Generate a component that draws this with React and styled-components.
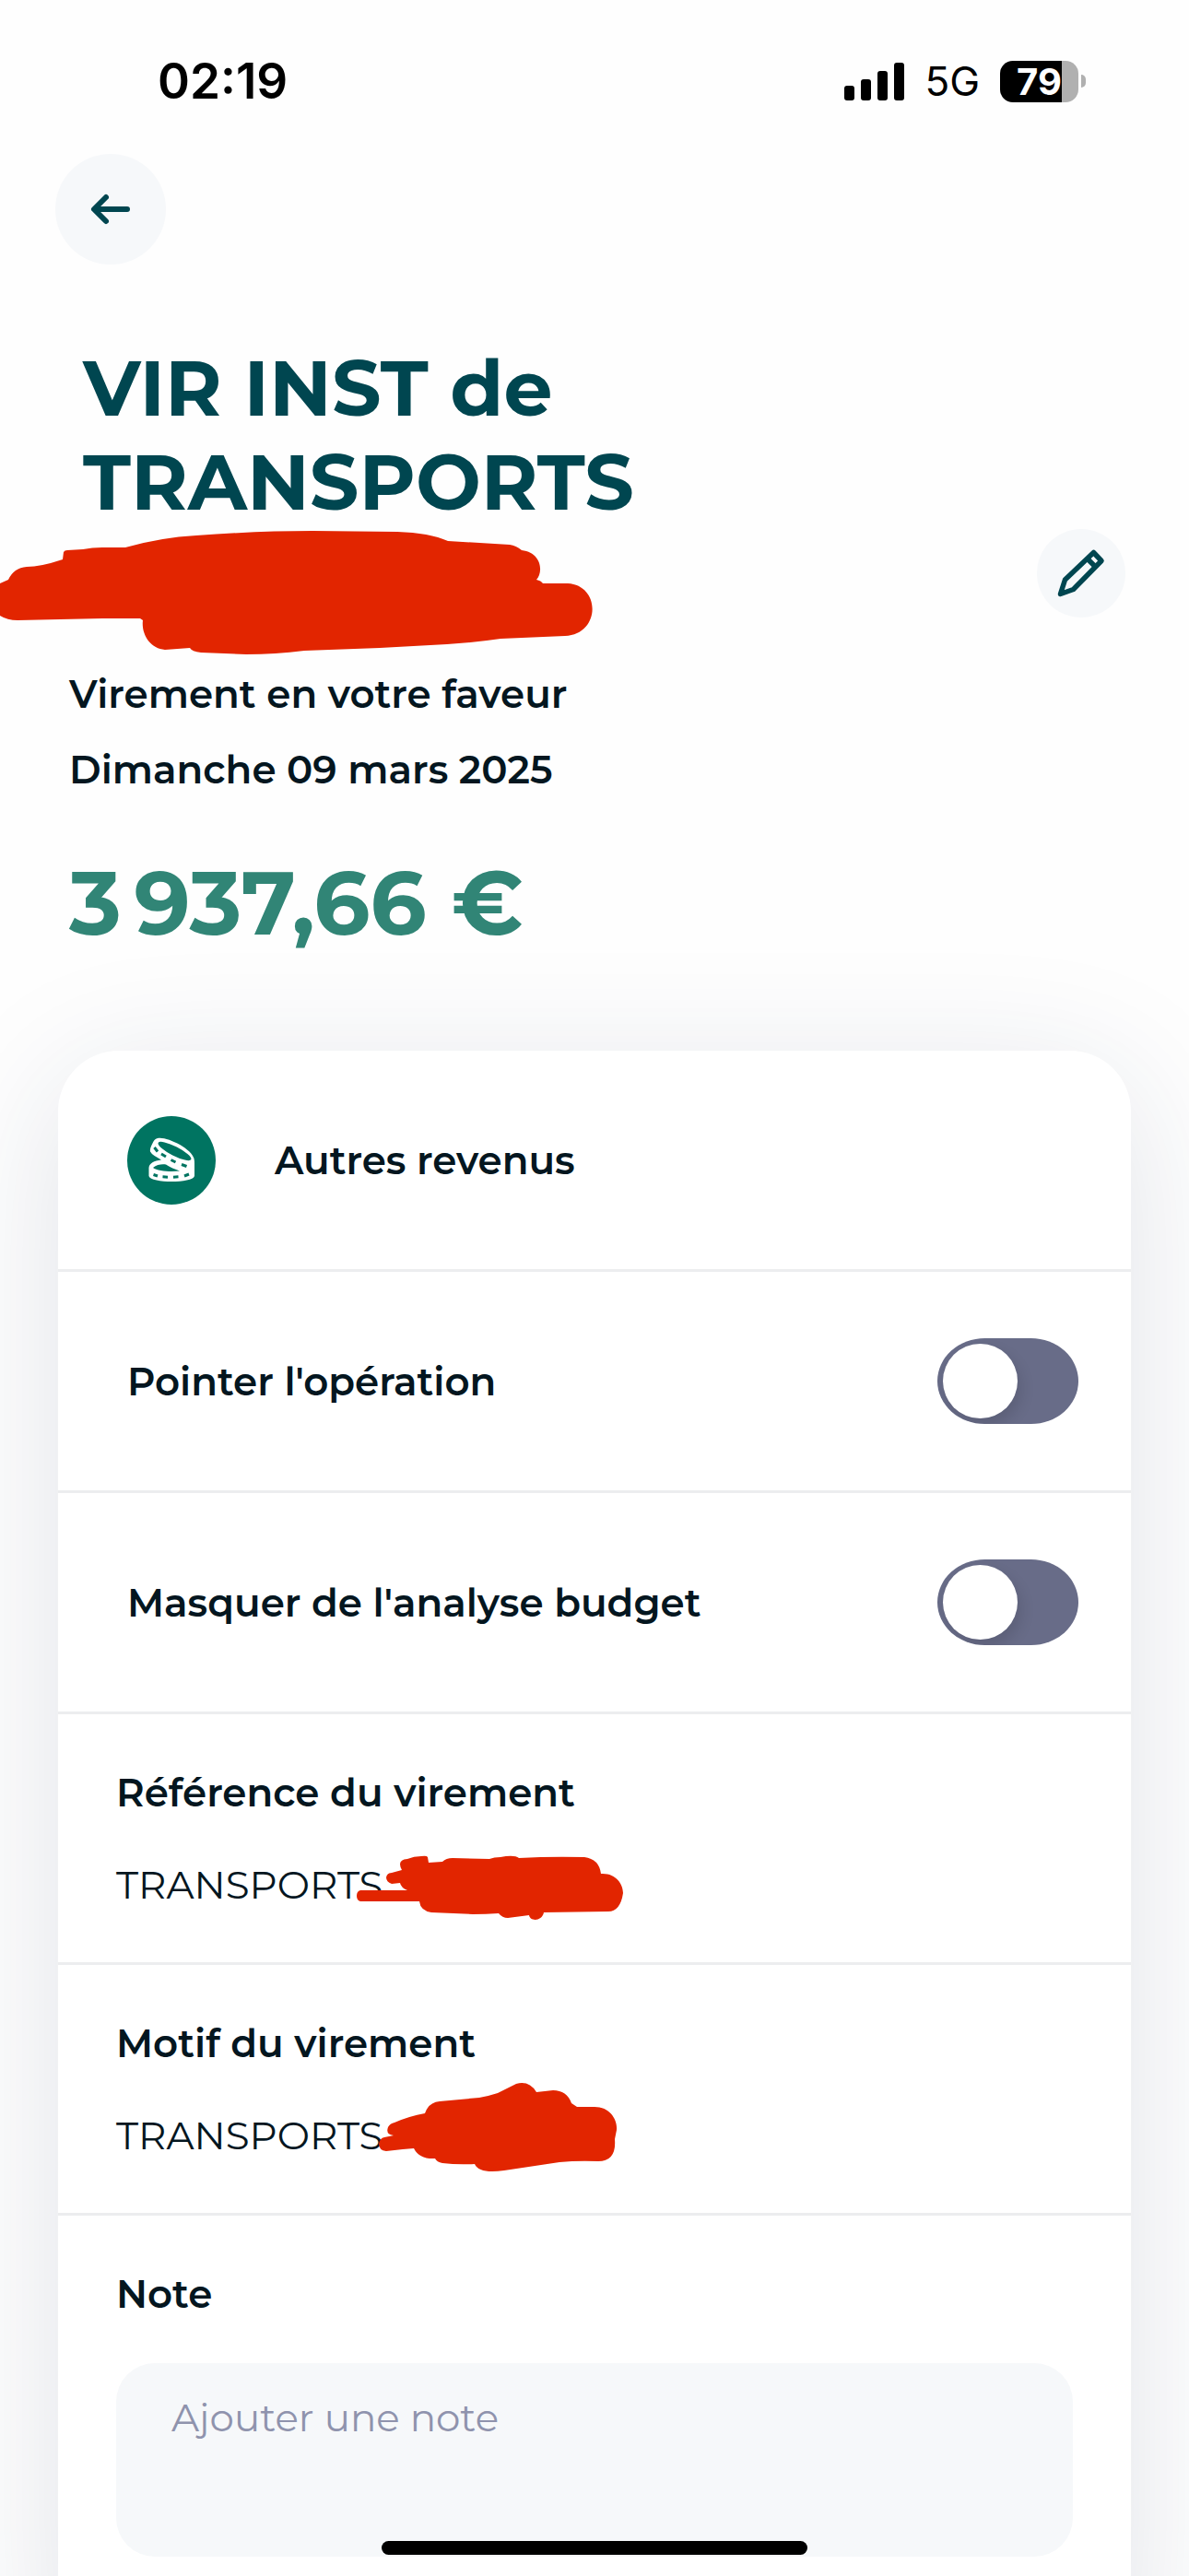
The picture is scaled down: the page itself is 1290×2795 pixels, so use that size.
import React, { useState } from "react";
import styled, { createGlobalStyle } from "styled-components";

const colors = {
  ink: "#04161f",
  petrol: "#004650",
  amount: "#318576",
  green: "#007461",
  red: "#e22500",
  soft: "#f6f8fa",
  line: "#ecedef",
  toggle: "#686c88",
  placeholder: "#8f93ad",
};

const GlobalStyle = createGlobalStyle`
  * {
    box-sizing: border-box;
  }
  body {
    margin: 0;
    background: #fefefe;
    color: ${colors.ink};
    font-family: Montserrat, Inter, "Liberation Sans", sans-serif;
  }
`;

const Screen = styled.div`
  display: flex;
  flex-direction: column;
  height: 100vh;
  overflow: hidden;
  position: relative;
`;

const StatusBar = styled.div`
  flex: none;
  display: flex;
  justify-content: space-between;
  align-items: center;
  padding: 56px 112px 47px 171px;
  color: #000;
  font-family: Inter, sans-serif;
`;

const Clock = styled.time`
  font-size: 53px;
  line-height: 64px;
  font-weight: 600;
`;

const Indicators = styled.div`
  display: flex;
  align-items: center;
  gap: 22px;
`;

const Network = styled.span`
  font-size: 44px;
  line-height: 64px;
`;

const Battery = styled.div`
  display: flex;
  align-items: center;
  gap: 3px;
`;

const BatteryBody = styled.div`
  width: 85px;
  height: 45px;
  border-radius: 14px;
  background: linear-gradient(to right, #000 79%, #b0b0b0 79%);
  color: #fff;
  font-size: 40px;
  line-height: 45px;
  font-weight: 700;
  text-align: center;
`;

const BatteryTip = styled.div`
  width: 5px;
  height: 14px;
  border-radius: 0 5px 5px 0;
  background: #b0b0b0;
`;

const Nav = styled.nav`
  flex: none;
  padding: 0 60px;
`;

const RoundButton = styled.button`
  display: flex;
  flex: none;
  align-items: center;
  justify-content: center;
  width: ${({ $size }) => $size}px;
  height: ${({ $size }) => $size}px;
  padding: 0;
  border: none;
  border-radius: 50%;
  background: ${colors.soft};
  color: ${colors.petrol};
  cursor: pointer;
`;

const Heading = styled.header`
  flex: none;
  display: flex;
  justify-content: space-between;
  align-items: flex-end;
  padding: 83px 69px 0 0;

  ${RoundButton} {
    margin-bottom: 42px;
  }
`;

const Title = styled.h1`
  margin: 0;
  padding-left: 90px;
  color: ${colors.petrol};
  font-size: 84px;
  line-height: 102px;
  font-weight: 700;
`;

const Mask = styled.svg`
  display: block;
  fill: ${colors.red};
`;

const Summary = styled.section`
  flex: none;
  padding: 0 75px;
`;

const Detail = styled.p`
  margin: 0;
  font-size: 42px;
  line-height: 82px;
  font-weight: 600;
`;

const Amount = styled.p`
  margin: 44px 0 0;
  color: ${colors.amount};
  font-size: 96px;
  line-height: 120px;
  font-weight: 700;
`;

const Card = styled.main`
  flex: none;
  margin: 100px 63px 0;
  padding-bottom: 66px;
  border-radius: 66px;
  background: #fff;
  box-shadow: 0 30px 150px rgba(30, 45, 85, 0.13);
`;

const Row = styled.div`
  display: flex;
  align-items: center;
  justify-content: ${({ $spread }) => ($spread ? "space-between" : "flex-start")};
  gap: 64px;
  height: 240px;
  padding: 0 57px 0 75px;
  border-bottom: 3px solid ${colors.line};
  font-size: 42px;
  font-weight: 600;
`;

const Toggle = styled.input`
  appearance: none;
  flex: none;
  width: 153px;
  height: 93px;
  margin: 0;
  padding: 6px;
  overflow: hidden;
  border-radius: 52px / 47px;
  background: ${({ checked }) => (checked ? colors.green : colors.toggle)};
  cursor: pointer;

  &::before {
    content: "";
    display: block;
    width: 81px;
    height: 81px;
    margin-left: ${({ checked }) => (checked ? "60px" : "0")};
    border-radius: 50%;
    background: #fff;
    box-shadow: 4px 8px 16px rgba(0, 0, 0, 0.12);
  }
`;

const Block = styled.section`
  padding: 60px 63px 59px;
  border-bottom: ${({ $last }) => ($last ? "none" : `3px solid ${colors.line}`)};
`;

const BlockTitle = styled.h2`
  display: block;
  margin: 0 0 50px;
  font-size: 42px;
  line-height: 50px;
  font-weight: 600;
`;

const BlockValue = styled.p`
  position: relative;
  margin: 0;
  font-size: 42px;
  line-height: 50px;
  font-weight: 400;

  ${Mask} {
    position: absolute;
    left: ${({ $maskLeft }) => $maskLeft}px;
    top: ${({ $maskTop }) => $maskTop}px;
  }
`;

const NoteField = styled.textarea`
  display: block;
  width: 100%;
  height: 210px;
  padding: 34px 60px;
  border: none;
  border-radius: 42px;
  background: ${colors.soft};
  color: ${colors.ink};
  font: 400 42px/50px Montserrat, Inter, sans-serif;
  resize: none;

  &::placeholder {
    color: ${colors.placeholder};
    opacity: 1;
  }
`;

const HomeIndicator = styled.div`
  position: absolute;
  left: 50%;
  bottom: 23px;
  width: 462px;
  height: 15px;
  margin-left: -231px;
  border-radius: 8px;
  background: #000;
`;

const SignalIcon = () => (
  <svg width="65" height="41" viewBox="0 0 65 41" aria-hidden="true">
    <rect x="0" y="25" width="11" height="16" rx="3" />
    <rect x="18" y="18" width="11" height="23" rx="3" />
    <rect x="36" y="9" width="11" height="32" rx="3" />
    <rect x="54" y="0" width="11" height="41" rx="3" />
  </svg>
);

const ArrowIcon = () => (
  <svg
    width="48"
    height="40"
    viewBox="0 0 48 40"
    fill="none"
    stroke="currentColor"
    strokeWidth="6"
    strokeLinecap="round"
    strokeLinejoin="round"
    aria-hidden="true"
  >
    <path d="M42 20H7M19 7L6 20l13 13" />
  </svg>
);

const PencilIcon = () => (
  <svg
    width="54"
    height="54"
    viewBox="0 0 54 54"
    fill="none"
    stroke="currentColor"
    strokeWidth="5.500"
    strokeLinejoin="round"
    aria-hidden="true"
  >
    <path d="M4.500 49.500L9.500 34L40.500 4.500L49 13.500L18.500 44.500Z" />
    <path d="M33.500 11L42.500 20" />
  </svg>
);

const CoinsIcon = () => (
  <svg width="96" height="96" viewBox="0 0 96 96" aria-hidden="true">
    <circle cx="48" cy="48" r="48" fill={colors.green} />
    <path
      fill="#fff"
      d="M33 24C42 21.500 70 35 72.500 46C73 48 73 50 73 52V65C71 73 25.500 73 23.500 65V56C24 51 29 48.500 37 47.500C31 44 27 42 25 38.500C24.500 36 25.500 33 28.500 27.500C29.500 25.500 31 24.500 33 24Z"
    />
    <g fill={colors.green}>
      <ellipse cx="51.500" cy="38" rx="20" ry="5" transform="rotate(27 51.500 38)" />
      <path d="M28 56C32 52.500 38 51.800 42 52.500C46 55.500 52 57.500 57 59.500C48 60.500 33 60 28 56Z" />
    </g>
    <g fill="none" stroke={colors.green} strokeWidth="3">
      <path d="M29.500 34L33 38.500M37 41L42 44M47.500 47.500L52.500 50M59 52.500L64.500 54.500" />
      <path d="M28.500 63.500L33 65M38.500 65.800L44 66.200M50 66.200L55.500 65.800M62 65L67 63" />
    </g>
  </svg>
);

const NameMask = () => (
  <Mask width="646" height="138" viewBox="0 0 646 138" aria-hidden="true">
    <path d="M0 59L9 55Q15 42 29 41Q44 41 68 33L69 25Q70 23 73 23L90 22Q100 20 111 20L136 20Q175 9 213 7Q281 2 339 2L431 3Q466 4 486 13L553 17Q560 18 566 23C589 26 589 48 582 55Q587 56 589 59H616C652 61 652 114 613 116L543 119Q516 123 485 125L412 129L330 132Q299 136 267 136L218 134Q208 133 206 129L179 131C163 130 153 114 155 99L152 97L111 97L19 99Q8 99 0 94Z" />
  </Mask>
);

const ReferenceMask = () => (
  <Mask width="292" height="78" viewBox="0 0 292 78" aria-hidden="true">
    <path d="M5 43H56Q49 40 48 35L39 36Q33 34 33 29Q34 24 39 24L50 21Q44 10 56 9Q63 6 71 6Q77 5 78 7L79 13L94 12Q98 8 105 8L145 9Q150 7 157 7Q172 4 177 8Q212 6 248 7Q264 9 266 25C282 24 290 36 290 46Q287 66 274 66L204 67C202 77 189 77 188 70L165 73Q159 73 155 68Q141 69 127 69L82 67Q70 65 69 55H5Q1 54 1 49Q1 44 5 43Z" />
  </Mask>
);

const ReasonMask = () => (
  <Mask width="262" height="100" viewBox="0 0 262 100" aria-hidden="true">
    <path d="M7 61L17 59Q8 58 11 50Q13 46 18 45Q34 38 51 35Q55 23 67 22L110 18Q121 16 130 13L150 3Q164 -1 172 12L190 10Q205 10 210 24L216 28H235C252 28 260 42 259 53L257 63Q259 87 239 87Q217 86 197 88L137 97Q110 101 105 90Q86 91 70 89Q64 88 62 84Q45 85 39 73L27 74L9 76Q1 75 1 68Q2 62 7 61Z" />
  </Mask>
);

const ToggleRow = ({ id, label }) => {
  const [checked, setChecked] = useState(false);
  return (
    <Row $spread>
      <label htmlFor={id}>{label}</label>
      <Toggle
        id={id}
        type="checkbox"
        checked={checked}
        onChange={() => setChecked(!checked)}
      />
    </Row>
  );
};

const App = () => (
  <React.Fragment>
    <GlobalStyle />
    <Screen>
      <StatusBar>
        <Clock>02:19</Clock>
        <Indicators>
          <SignalIcon />
          <Network>5G</Network>
          <Battery>
            <BatteryBody>79</BatteryBody>
            <BatteryTip />
          </Battery>
        </Indicators>
      </StatusBar>

      <Nav>
        <RoundButton $size={120} aria-label="Retour">
          <ArrowIcon />
        </RoundButton>
      </Nav>

      <Heading>
        <div>
          <Title>
            VIR INST de
            <br />
            TRANSPORTS
          </Title>
          <NameMask />
        </div>
        <RoundButton $size={96} aria-label="Modifier">
          <PencilIcon />
        </RoundButton>
      </Heading>

      <Summary>
        <Detail>Virement en votre faveur</Detail>
        <Detail>Dimanche 09 mars 2025</Detail>
        <Amount>3&#8239;937,66 €</Amount>
      </Summary>

      <Card>
        <Row>
          <CoinsIcon />
          <span>Autres revenus</span>
        </Row>
        <ToggleRow id="check" label="Pointer l'opération" />
        <ToggleRow id="hide" label="Masquer de l'analyse budget" />
        <Block>
          <BlockTitle>Référence du virement</BlockTitle>
          <BlockValue $maskLeft={260} $maskTop={-12}>
            TRANSPORTS
            <ReferenceMask />
          </BlockValue>
        </Block>
        <Block>
          <BlockTitle>Motif du virement</BlockTitle>
          <BlockValue $maskLeft={284} $maskTop={-34}>
            TRANSPORTS
            <ReasonMask />
          </BlockValue>
        </Block>
        <Block $last>
          <BlockTitle as="label" htmlFor="note">
            Note
          </BlockTitle>
          <NoteField id="note" placeholder="Ajouter une note" />
        </Block>
      </Card>

      <HomeIndicator />
    </Screen>
  </React.Fragment>
);

export default App;
